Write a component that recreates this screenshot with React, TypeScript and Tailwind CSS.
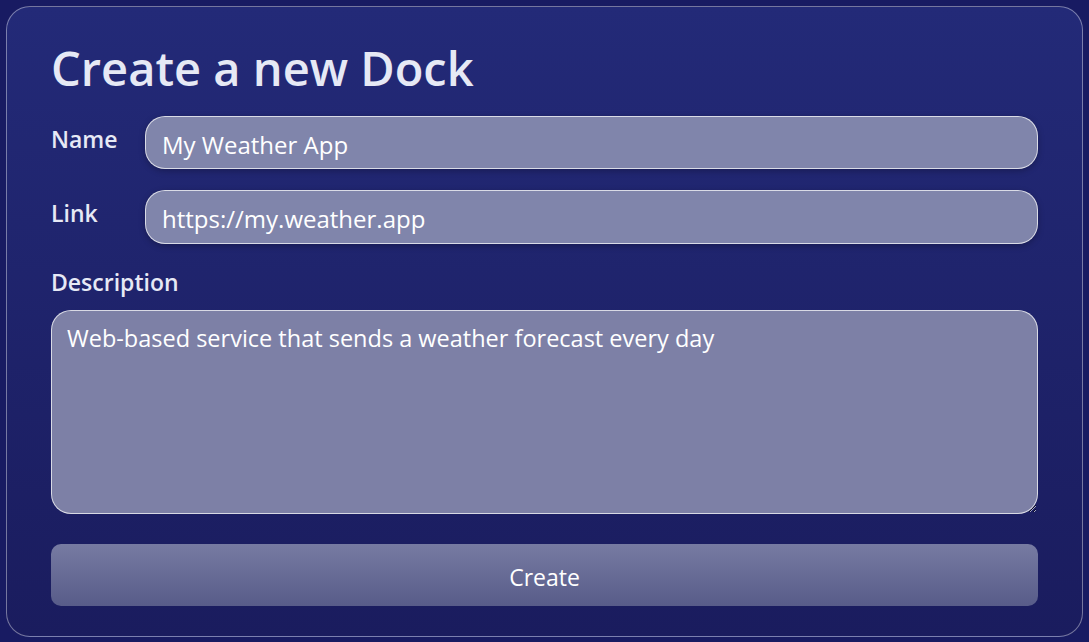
export default function App() {
  const font = { fontFamily: '"Open Sans", "Noto Sans", sans-serif' };
  return (
    <div className="min-h-[642px] w-full bg-[#181b62] p-[6px]" style={font}>
      <div className="rounded-[24px] border border-white/40 bg-gradient-to-b from-[#232a78] to-[#1a1c5e] px-[44px] pt-[33px] pb-[30px]">
        <h1 className="text-[47px] font-semibold leading-[56px] text-[#e6e9f5]">Create a new Dock</h1>

        <div className="mt-[20px] flex items-start">
          <label className="w-[94px] shrink-0 pt-[6px] text-[23px] font-semibold text-[#e6e9f5]">Name</label>
          <input
            defaultValue="My Weather App"
            className="h-[53px] flex-1 rounded-[20px] border border-white/70 bg-[#8085ab] px-[16px] pt-[3px] text-[24px] text-white shadow-[0_2px_6px_rgba(0,0,0,0.25)] outline-none"
            style={font}
          />
        </div>

        <div className="mt-[21px] flex items-start">
          <label className="w-[94px] shrink-0 pt-[6px] text-[23px] font-semibold text-[#e6e9f5]">Link</label>
          <input
            defaultValue="https://my.weather.app"
            className="h-[54px] flex-1 rounded-[20px] border border-white/70 bg-[#8085ab] px-[16px] pt-[3px] text-[24px] text-white shadow-[0_2px_6px_rgba(0,0,0,0.25)] outline-none"
            style={font}
          />
        </div>

        <label className="mt-[21px] block text-[23px] font-semibold text-[#e6e9f5]">Description</label>
        <textarea
          defaultValue="Web-based service that sends a weather forecast every day"
          className="mt-[10px] block h-[204px] w-full rounded-[20px] border border-white/70 bg-[#7d80a6] px-[15px] py-[11px] text-[23.5px] leading-[32px] text-white outline-none"
          style={font}
        />

        <button
          className="mt-[30px] h-[62px] w-full rounded-[10px] bg-gradient-to-b from-[#777ba2] to-[#585c89] pt-[5px] text-[23px] text-white"
          style={font}
        >
          Create
        </button>
      </div>
    </div>
  );
}
